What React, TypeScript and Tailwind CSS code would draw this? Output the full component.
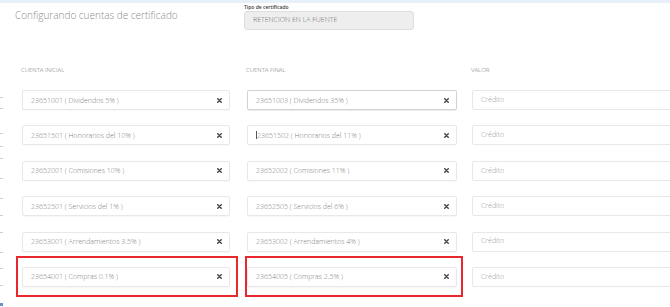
import React from "react";

const rows: [string, string][] = [
  ["23651001 ( Dividendos 5% )", "23651003 ( Dividendos 35% )"],
  ["23651501 ( Honorarios del 10% )", "23651502 ( Honorarios del 11% )"],
  ["23652001 ( Comisiones 10% )", "23652002 ( Comisiones 11% )"],
  ["23652501 ( Servicios del 1% )", "23652505 ( Servicios del 6% )"],
  ["23653001 ( Arrendamientos 3.5% )", "23653002 ( Arrendamientos 4% )"],
  ["23654001 ( Compras 0.1% )", "23654005 ( Compras 2.5% )"],
];

function XIcon() {
  return (
    <svg width="5" height="5" viewBox="0 0 5 5" className="shrink-0">
      <path d="M0.8 0.8 L4.2 4.2 M4.2 0.8 L0.8 4.2" stroke="#444" strokeWidth="1.4" strokeLinecap="square" />
    </svg>
  );
}

function SelectBox({ text, width, caret, focus }: { text: string; width: string; caret?: boolean; focus?: boolean }) {
  return (
    <div
      className={`${width} shrink-0 h-[20px] bg-white rounded-[2px] border ${focus ? "border-[#d2d2d2] shadow-[0_1px_1px_rgba(0,0,0,0.08)]" : "border-[#e8e8e8] shadow-[0_1px_1px_rgba(0,0,0,0.03)]"} flex items-center pl-[8px] pr-[7px]`}
    >
      {caret && <span className="w-px h-[8px] bg-[#555]" />}
      <span className="flex-1 text-[7px] font-light text-[#808080] leading-none whitespace-nowrap">{text}</span>
      <XIcon />
    </div>
  );
}

export default function App() {
  const ticks = [97, 108, 133, 146, 158, 178, 198, 215, 232, 252, 268, 285];
  return (
    <div className="w-[670px] h-[307px] overflow-hidden bg-white relative font-['Open_Sans',sans-serif]">
      <div className="h-[3px] bg-[#e7eff9]" />
      <div className="flex h-[27px]">
        <div className="w-[244px] shrink-0 pl-[15px] pt-[5px] text-[10px] leading-[14px] font-light text-[#8c8c8c] whitespace-nowrap">
          Configurando cuentas de certificado
        </div>
        <div className="flex flex-col w-[170px] shrink-0">
          <span className="text-[5px] leading-[8px] font-semibold text-[#3a3a3a] whitespace-nowrap">Tipo de certificado</span>
          <div className="h-[19px] bg-[#eeeeee] border border-[#dedede] rounded-[3px] flex items-center pl-[8px] text-[7px] font-light text-[#707070] whitespace-nowrap">
            RETENCION EN LA FUENTE
          </div>
        </div>
      </div>

      <div className="flex pl-[21px] mt-[36px] h-[8px] text-[6px] leading-[8px] font-light text-[#707070] whitespace-nowrap">
        <div className="w-[225px] shrink-0">CUENTA INICIAL</div>
        <div className="w-[225px] shrink-0">CUENTA FINAL</div>
        <div>VALOR</div>
      </div>

      <div className="flex flex-col gap-y-[15.4px] pl-[22px] mt-[16px]">
        {rows.map(([a, b], i) => (
          <div key={i} className="flex items-center">
            <SelectBox text={a} width="w-[208px]" />
            <div className="w-[17px] shrink-0" />
            <SelectBox text={b} width="w-[210px]" caret={i === 1} focus={i === 0} />
            <div className="w-[15px] shrink-0" />
            <div className="w-[210px] h-[20px] shrink-0 bg-white rounded-[2px] border border-[#e8e8e8] flex items-center pl-[8px] text-[7px] font-light text-[#999]">
              Crédito
            </div>
          </div>
        ))}
      </div>

      {ticks.map((t) => (
        <div key={t} className="absolute left-0 w-[3px] h-px bg-[#cfcfcf]" style={{ top: t }} />
      ))}
      <div className="absolute left-0 top-[303px] w-[3px] h-[3px] bg-[#6d8fc9]" />

      <div className="absolute left-[16px] top-[256px] w-[222px] h-[41px] border-2 border-[#e8282b]" />
      <div className="absolute left-[245px] top-[256px] w-[218px] h-[41px] border-2 border-[#e8282b]" />
    </div>
  );
}
